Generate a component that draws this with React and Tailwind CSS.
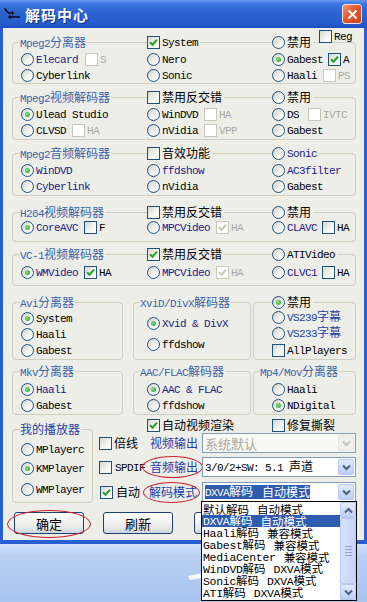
import React from 'react';

const CJK = /([\u3000-\u9fff\uff00-\uffef]+)/;

// mixed text: SimSun-like widths, latin 6px / hanzi 12px
function T({ s, className = '', wide }) {
  return (
    <span className={`whitespace-pre leading-none ${className}`}>
      {s.split(CJK).filter(Boolean).map((p, i) =>
        CJK.test(p) ? (
          <span key={i} className={`font-['Noto_Sans_CJK_SC',sans-serif] leading-[12px] ${wide ? 'text-[11.5px]' : 'text-[12px]'}`}>
            {p}
          </span>
        ) : (
          <span
            key={i}
            className={`font-['Liberation_Mono',monospace] leading-[12px] ${wide ? 'text-[11.5px] tracking-[-0.3px]' : 'text-[11px] tracking-[-0.6px]'}`}
          >
            {p}
          </span>
        )
      )}
    </span>
  );
}

const tone = {
  k: 'text-black',
  n: 'text-[#1B2088]',
  d: 'text-[#A9A9A2]',
  t: 'text-[#3A64A8]',
  b: 'text-[#2440A6]',
};

function Radio({ on }) {
  return (
    <span className="flex h-[13px] w-[13px] shrink-0 items-center justify-center rounded-full border border-[#1C5180] bg-[linear-gradient(135deg,#D2D2CA_0%,#F2F2EE_55%,#FFFFFF_100%)]">
      {on && <span className="h-[5px] w-[5px] rounded-full bg-[radial-gradient(circle_at_40%_40%,#86E382,#1E9A1E)]" />}
    </span>
  );
}

function Check({ on, dis }) {
  return (
    <span
      className={`flex h-[13px] w-[13px] shrink-0 items-center justify-center border ${
        dis ? 'border-[#C9C7BA] bg-white' : 'border-[#1C5180] bg-[linear-gradient(135deg,#D6D6CE_0%,#F4F4F0_55%,#FFFFFF_100%)]'
      }`}
    >
      {on && (
        <svg width="9" height="9" viewBox="0 0 9 9">
          <path d="M1 4.2 L3.5 6.7 L8 1.6" fill="none" stroke={dis ? '#C9C7BA' : '#21A121'} strokeWidth="2" />
        </svg>
      )}
    </span>
  );
}

// one option: radio/checkbox + label (+ small sub checkbox)
function Opt({ r, on, t, c = 'k', sub, mask }) {
  return (
    <span className={`flex items-center gap-[2px] ${mask ? 'w-fit bg-[#EEEEE9] pr-[2px]' : ''}`}>
      {r ? <Radio on={on} /> : <Check on={on} />}
      <T s={t} className={tone[c]} />
      {sub}
    </span>
  );
}

function Sub({ t, on, dis, gap = 'ml-[4px]' }) {
  return (
    <span className={`flex items-center gap-[2px] ${gap}`}>
      <Check on={on} dis={dis} />
      <T s={t} className={dis ? tone.d : tone.k} />
    </span>
  );
}

function Title({ s, cls = '-ml-[1px]' }) {
  return (
    <span className={`inline-block w-fit bg-[#EEEEE9] pr-[1px] ${cls}`}>
      <T s={s} className={tone.t} />
    </span>
  );
}

function Row({ a, b, c, cls = '' }) {
  return (
    <div className={`flex h-[16px] items-center ${cls}`}>
      <div className="w-[126px]">{a}</div>
      <div className="w-[125px]">{b}</div>
      <div>{c}</div>
    </div>
  );
}

function Box({ cls, children }) {
  return <div className={`shrink-0 rounded-[4px] border border-[#D0D0BF] ${cls}`}>{children}</div>;
}

function Drop({ dis }) {
  return (
    <span
      className={`flex h-[16px] w-[16px] items-center justify-center rounded-[2px] border ${
        dis ? 'border-[#E4E3DC] bg-[#F1F0EC]' : 'border-[#B6C9F3] bg-[linear-gradient(180deg,#E3EBFD,#BCCEF7)]'
      }`}
    >
      <svg width="9" height="7" viewBox="0 0 9 7">
        <path d="M1 1.5 L4.5 5 L8 1.5" fill="none" stroke={dis ? '#C4C4BC' : '#4D6185'} strokeWidth="2" />
      </svg>
    </span>
  );
}

function Select({ dis, children, extra }) {
  return (
    <div className={`relative flex h-[20px] w-[154px] items-center border border-[#7F9DB9] px-[1px] ${dis ? 'bg-[#F8F8F5]' : 'bg-white'}`}>
      <div className="flex flex-1 items-center pl-[1px]">{children}</div>
      <Drop dis={dis} />
      {extra}
    </div>
  );
}

function Gap({ w = 'w-[9px]' }) {
  return <span className={`inline-block ${w}`} />;
}

function Btn({ s }) {
  return (
    <div className="flex h-[22px] w-[70px] items-center justify-center rounded-[3px] border border-[#1F3F78] bg-[linear-gradient(180deg,#FFFFFF_0%,#F6F6F3_35%,#E6E7E6_75%,#CCD3E0_100%)]">
      <span className="font-['Noto_Sans_CJK_SC',sans-serif] text-[13px] leading-none text-black">{s}</span>
    </div>
  );
}

const LIST = [
  ['默认解码', '自动模式'],
  ['DXVA解码', '自动模式'],
  ['Haali解码', '兼容模式'],
  ['Gabest解码', '兼容模式'],
  ['MediaCenter', '兼容模式'],
  ['WinDVD解码', 'DXVA模式'],
  ['Sonic解码', 'DXVA模式'],
  ['ATI解码', 'DXVA模式'],
];

function DropList() {
  return (
    <div className="absolute left-[-2px] top-full z-10 flex h-[100px] w-[156px] border border-black bg-white">
      <div className="flex flex-1 flex-col pt-[1px]">
        {LIST.map(([a, b], i) => (
          <div key={i} className={`flex h-[12px] shrink-0 items-center pl-[1px] ${i === 1 ? 'bg-[#2F5CAE] text-white' : 'text-black'}`}>
            <T s={a} wide />
            <Gap w="w-[8px]" />
            <T s={b} wide />
          </div>
        ))}
      </div>
      <div className="flex w-[16px] flex-col bg-[#F4F3EE]">
        <span className="flex h-[16px] items-center justify-center rounded-[2px] border border-[#B6C9F3] bg-[linear-gradient(180deg,#E3EBFD,#BCCEF7)]">
          <svg width="9" height="7" viewBox="0 0 9 7">
            <path d="M1 5.5 L4.5 2 L8 5.5" fill="none" stroke="#4D6185" strokeWidth="2" />
          </svg>
        </span>
        <span className="flex flex-1 flex-col items-center justify-center gap-[2px] rounded-[2px] border border-[#B6C9F3] bg-[linear-gradient(90deg,#D6E1FB,#C5D5F8)]">
          <span className="h-px w-[7px] bg-[#8EA5D8]" />
          <span className="h-px w-[7px] bg-[#8EA5D8]" />
          <span className="h-px w-[7px] bg-[#8EA5D8]" />
          <span className="h-px w-[7px] bg-[#8EA5D8]" />
        </span>
        <span className="flex h-[16px] items-center justify-center rounded-[2px] border border-[#B6C9F3] bg-[linear-gradient(180deg,#E3EBFD,#BCCEF7)]">
          <svg width="9" height="7" viewBox="0 0 9 7">
            <path d="M1 1.5 L4.5 5 L8 1.5" fill="none" stroke="#4D6185" strokeWidth="2" />
          </svg>
        </span>
      </div>
    </div>
  );
}

function Ring({ cls }) {
  return <span className={`pointer-events-none absolute rounded-[50%] border border-[#C8242C] ${cls}`} />;
}

export default function App() {
  return (
    <div className="relative flex h-[602px] w-[367px] flex-col overflow-hidden font-['Noto_Sans_CJK_SC',sans-serif] text-[12px]">
      {/* title bar */}
      <div className="flex h-[28px] shrink-0 items-center bg-[linear-gradient(180deg,#6A9CF0_0%,#3B76E0_14%,#2C64D4_45%,#285DCD_80%,#1D4EBE_100%)]">
        <svg className="ml-[3px]" width="18" height="16" viewBox="0 0 18 16">
          <path d="M1.5 2.5 L5.5 7 L9 7" fill="none" stroke="#0A0A0A" strokeWidth="1.5" />
          <path d="M9 4.5 L11.5 7 L9 9.5 Z" fill="#0A0A0A" />
          <path d="M17 11 L7 11" fill="none" stroke="#0A0A0A" strokeWidth="1.5" />
          <path d="M7.5 8.5 L5 11 L7.5 13.5 Z" fill="#0A0A0A" />
        </svg>
        <span className="ml-[4px] text-[15px] font-bold leading-none tracking-[1px] text-white [text-shadow:1px_1px_0_#10308A]">解码中心</span>
        <span className="ml-auto mr-[5px] flex h-[20px] w-[20px] items-center justify-center rounded-[3px] border border-[#F4E2DC] bg-[linear-gradient(135deg,#F19A7A_0%,#E2582F_45%,#C8421C_100%)]">
          <svg width="11" height="11" viewBox="0 0 11 11">
            <path d="M1.5 1.5 L9.5 9.5 M9.5 1.5 L1.5 9.5" stroke="white" strokeWidth="2" />
          </svg>
        </span>
      </div>

      {/* client area */}
      <div className="shrink-0 border-x-[3px] border-b-[4px] border-[#2A5ED3] bg-[#EEEEE9] pb-[6px]">
        <div className="flex h-[14px] items-start pl-[316px]">
          <span className="mt-[1px] flex items-center gap-[2px]">
            <Check />
            <T s="Reg" />
          </span>
        </div>

        {/* Mpeg2 splitter */}
        <Box cls="ml-[9px] h-[42px] w-[344px] pl-[8px]">
          <Row cls="-mt-[9px]" a={<Title s="Mpeg2分离器" />} b={<Opt on t="System" mask />} c={<Opt r t="禁用" mask />} />
          <Row
            cls="mt-[1px]"
            a={<Opt r t="Elecard" c="n" sub={<Sub t="S" dis gap="ml-[5px]" />} />}
            b={<Opt r t="Nero" />}
            c={<Opt r on t="Gabest" sub={<Sub t="A" on gap="ml-[3px]" />} />}
          />
          <Row a={<Opt r t="Cyberlink" />} b={<Opt r t="Sonic" />} c={<Opt r t="Haali" sub={<Sub t="PS" dis />} />} />
        </Box>

        {/* Mpeg2 video */}
        <Box cls="ml-[9px] mt-[13px] h-[43px] w-[344px] pl-[8px]">
          <Row cls="-mt-[9px]" a={<Title s="Mpeg2视频解码器" />} b={<Opt t="禁用反交错" mask />} c={<Opt r t="禁用" mask />} />
          <Row
            cls="mt-[1px]"
            a={<Opt r on t="Ulead Studio" />}
            b={<Opt r t="WinDVD" sub={<Sub t="HA" dis />} />}
            c={<Opt r t="DS" sub={<Sub t="IVTC" dis gap="ml-[7px]" />} />}
          />
          <Row
            a={<Opt r t="CLVSD" sub={<Sub t="HA" dis />} />}
            b={<Opt r t="nVidia" sub={<Sub t="VPP" dis />} />}
            c={<Opt r t="Gabest" />}
          />
        </Box>

        {/* Mpeg2 audio */}
        <Box cls="ml-[9px] mt-[13px] h-[43px] w-[344px] pl-[8px]">
          <Row cls="-mt-[9px]" a={<Title s="Mpeg2音频解码器" />} b={<Opt t="音效功能" mask />} c={<Opt r t="Sonic" c="n" mask />} />
          <Row cls="mt-[1px]" a={<Opt r on t="WinDVD" c="n" />} b={<Opt r t="ffdshow" c="n" />} c={<Opt r t="AC3filter" c="n" />} />
          <Row a={<Opt r t="Cyberlink" c="n" />} b={<Opt r t="nVidia" />} c={<Opt r t="Gabest" />} />
        </Box>

        {/* H264 */}
        <Box cls="ml-[9px] mt-[16px] h-[30px] w-[344px] pl-[8px]">
          <Row cls="-mt-[9px]" a={<Title s="H264视频解码器" />} b={<Opt t="禁用反交错" mask />} c={<Opt r t="禁用" mask />} />
          <Row
            cls="-mt-[1px]"
            a={<Opt r on t="CoreAVC" c="n" sub={<Sub t="F" />} />}
            b={<Opt r t="MPCVideo" c="n" sub={<Sub t="HA" on dis />} />}
            c={<Opt r t="CLAVC" c="n" sub={<Sub t="HA" gap="ml-[3px]" />} />}
          />
        </Box>

        {/* VC-1 */}
        <Box cls="ml-[9px] mt-[12px] h-[32px] w-[344px] pl-[8px]">
          <Row cls="-mt-[9px]" a={<Title s="VC-1视频解码器" />} b={<Opt on t="禁用反交错" mask />} c={<Opt r t="ATIVideo" mask />} />
          <Row
            cls="mt-[2px]"
            a={<Opt r on t="WMVideo" c="n" sub={<Sub t="HA" on />} />}
            b={<Opt r t="MPCVideo" c="n" sub={<Sub t="HA" on dis />} />}
            c={<Opt r t="CLVC1" c="n" sub={<Sub t="HA" gap="ml-[3px]" />} />}
          />
        </Box>

        {/* avi / xvid / subtitles */}
        <div className="ml-[9px] mt-[16px] flex">
          <Box cls="h-[58px] w-[111px] pl-[8px]">
            <div className="-mt-[9px] flex h-[16px] items-center"><Title s="Avi分离器" /></div>
            <div className="flex h-[16px] items-center"><Opt r on t="System" /></div>
            <div className="flex h-[16px] items-center"><Opt r t="Haali" /></div>
            <div className="flex h-[16px] items-center"><Opt r t="Gabest" /></div>
          </Box>
          <Box cls="ml-[10px] h-[58px] w-[118px] pl-[13px]">
            <div className="-mt-[9px] flex h-[16px] items-center"><Title s="XviD/DivX解码器" cls="-ml-[7px]" /></div>
            <div className="mt-[5px] flex h-[16px] items-center"><Opt r on t="Xvid & DivX" c="n" /></div>
            <div className="mt-[5px] flex h-[16px] items-center"><Opt r t="ffdshow" /></div>
          </Box>
          <Box cls="ml-[2px] h-[58px] w-[103px] pl-[18px]">
            <div className="-mt-[9px] flex h-[16px] items-center"><Opt r on t="禁用" mask /></div>
            <div className="-mt-[1px] flex h-[16px] items-center"><Opt r t="VS239字幕" c="b" /></div>
            <div className="flex h-[16px] items-center"><Opt r t="VS233字幕" c="b" /></div>
            <div className="mt-[1px] flex h-[16px] items-center"><Opt t="AllPlayers" /></div>
          </Box>
        </div>

        {/* mkv / aac / mp4 */}
        <div className="ml-[9px] mt-[11px] flex">
          <Box cls="h-[44px] w-[111px] pl-[8px]">
            <div className="-mt-[9px] flex h-[16px] items-center"><Title s="Mkv分离器" /></div>
            <div className="mt-[2px] flex h-[16px] items-center"><Opt r on t="Haali" c="n" /></div>
            <div className="flex h-[16px] items-center"><Opt r t="Gabest" /></div>
          </Box>
          <Box cls="ml-[10px] h-[44px] w-[118px] pl-[13px]">
            <div className="-mt-[9px] flex h-[16px] items-center"><Title s="AAC/FLAC解码器" cls="-ml-[7px]" /></div>
            <div className="mt-[2px] flex h-[16px] items-center"><Opt r on t="AAC & FLAC" c="n" /></div>
            <div className="flex h-[16px] items-center"><Opt r t="ffdshow" /></div>
          </Box>
          <Box cls="ml-[2px] h-[44px] w-[103px] pl-[18px]">
            <div className="-mt-[9px] flex h-[16px] items-center"><Title s="Mp4/Mov分离器" cls="-ml-[12px]" /></div>
            <div className="mt-[2px] flex h-[16px] items-center"><Opt r t="Haali" /></div>
            <div className="flex h-[16px] items-center"><Opt r on t="NDigital" /></div>
          </Box>
        </div>

        {/* player + outputs */}
        <div className="flex">
          <Box cls="ml-[9px] mt-[14px] h-[74px] w-[81px] pl-[8px]">
            <div className="-mt-[9px] flex h-[16px] items-center">
              <span className="-ml-[1px] bg-[#EEEEE9] pr-[1px] text-[12px] leading-none text-[#2440A6]">我的播放器</span>
            </div>
            <div className="mt-[4px] flex h-[16px] items-center"><Opt r t="MPlayerc" /></div>
            <div className="mt-[3px] flex h-[16px] items-center"><Opt r on t="KMPlayer" /></div>
            <div className="mt-[5px] flex h-[16px] items-center"><Opt r t="WMPlayer" /></div>
          </Box>

          <div className="ml-[5px] flex flex-col">
            <div className="mt-[2px] flex h-[16px] items-center pl-[49px]">
              <div className="w-[125px]"><Opt on t="自动视频渲染" /></div>
              <Opt t="修复撕裂" />
            </div>

            <div className="flex h-[20px] items-center">
              <div className="flex w-[104px] items-center gap-[2px] pl-[1px]">
                <Check />
                <T s="倍线" />
                <span className="ml-auto mr-[4px] text-[12px] leading-none text-[#1E3CA8]">视频输出</span>
              </div>
              <Select dis>
                <span className="text-[13px] leading-none text-[#ACA899]">系统默认</span>
              </Select>
            </div>

            <div className="mt-[4px] flex h-[20px] items-center">
              <div className="flex w-[104px] items-center gap-[3px] pl-[1px]">
                <Check />
                <T s="SPDIF" />
                <span className="relative ml-auto mr-[4px] text-[12px] leading-none text-[#1E3CA8]">
                  音频输出
                  <Ring cls="-bottom-[5px] -left-[8px] -right-[5px] -top-[5px]" />
                </span>
              </div>
              <Select>
                <T s="3/0/2+SW: 5.1 声道" />
              </Select>
            </div>

            <div className="mt-[5px] flex h-[20px] items-center">
              <div className="flex w-[104px] items-center gap-[3px] pl-[2px]">
                <Check on />
                <span className="text-[12px] leading-none">自动</span>
                <span className="relative ml-auto mr-[5px] text-[12px] leading-none text-[#1E3CA8]">
                  解码模式
                  <Ring cls="-bottom-[5px] -left-[6px] -right-[3px] -top-[4px]" />
                </span>
              </div>
              <Select extra={<DropList />}>
                <span className="flex h-[14px] items-center bg-[#2F5CAE] text-white">
                  <T s="DXVA解码" />
                  <Gap />
                  <T s="自动模式" />
                </span>
              </Select>
            </div>
          </div>
        </div>

        {/* buttons */}
        <div className="ml-[11px] mt-[9px] flex">
          <div className="relative">
            <Btn s="确定" />
            <Ring cls="-bottom-[4px] -left-[7px] -right-[7px] -top-[2px]" />
          </div>
          <div className="ml-[19px]"><Btn s="刷新" /></div>
          <div className="ml-[21px]"><Btn s="退出" /></div>
        </div>
      </div>

      {/* desktop */}
      <div className="flex-1 bg-[linear-gradient(180deg,#D2E1F8_0%,#B9D0F3_20%,#A8C4EF_100%)]" />

      {/* watermark swoosh */}
      <svg className="pointer-events-none absolute left-[186px] top-[558px]" width="150" height="30" viewBox="0 0 150 30">
        <path d="M2 18 C30 12 70 8 112 6 L114 10 C80 12 40 16 4 22 Z" fill="white" opacity="0.9" />
      </svg>
    </div>
  );
}
